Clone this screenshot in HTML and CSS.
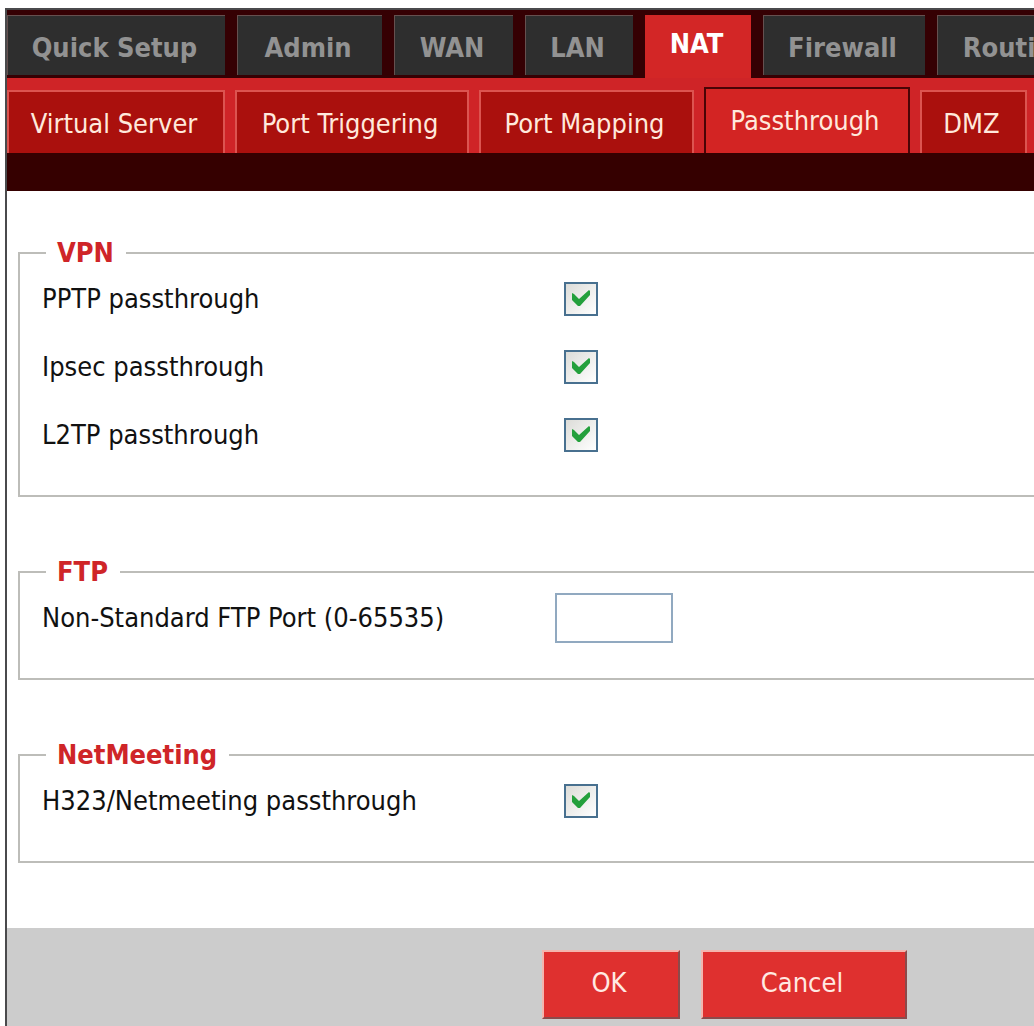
FILE: index.html
```html
<!DOCTYPE html>
<html lang="en">
<head>
<meta charset="utf-8">
<meta name="viewport" content="width=device-width, initial-scale=1">
<title>NAT - Passthrough</title>
<link rel="stylesheet" href="styles.css">
</head>
<body>
<svg class="defs" aria-hidden="true">
  <symbol id="tick" viewBox="0 0 20 20"><path d="M1 4 L3 5 L8 10 L18 1 L19 2 L19 6 L9 17 L7 17 L1 11 Z" fill="#24a03c"/></symbol>
</svg>
<div class="frame">
  <nav class="tabs" aria-label="Sections">
    <a class="tab" href="#">Quick Setup</a>
    <a class="tab" href="#">Admin</a>
    <a class="tab" href="#">WAN</a>
    <a class="tab" href="#">LAN</a>
    <a class="tab tab-active" href="#" aria-current="page">NAT</a>
    <a class="tab" href="#">Firewall</a>
    <a class="tab" href="#">Routing</a>
  </nav>
  <nav class="subtabs" aria-label="NAT pages">
    <a class="subtab" href="#">Virtual Server</a>
    <a class="subtab" href="#">Port Triggering</a>
    <a class="subtab" href="#">Port Mapping</a>
    <a class="subtab subtab-active" href="#" aria-current="page">Passthrough</a>
    <a class="subtab" href="#">DMZ</a>
  </nav>
  <div class="strip"></div>
  <form class="form">
    <div class="groups">
      <fieldset class="group">
        <legend>VPN</legend>
        <div class="row">
          <label for="pptp">PPTP passthrough</label>
          <span class="check"><input type="checkbox" id="pptp" checked><svg><use href="#tick"/></svg></span>
        </div>
        <div class="row">
          <label for="ipsec">Ipsec passthrough</label>
          <span class="check"><input type="checkbox" id="ipsec" checked><svg><use href="#tick"/></svg></span>
        </div>
        <div class="row">
          <label for="l2tp">L2TP passthrough</label>
          <span class="check"><input type="checkbox" id="l2tp" checked><svg><use href="#tick"/></svg></span>
        </div>
      </fieldset>
      <fieldset class="group">
        <legend>FTP</legend>
        <div class="row">
          <label for="port">Non-Standard FTP Port (0-65535)</label>
          <input class="port" type="text" id="port" inputmode="numeric">
        </div>
      </fieldset>
      <fieldset class="group">
        <legend>NetMeeting</legend>
        <div class="row">
          <label for="h323">H323/Netmeeting passthrough</label>
          <span class="check"><input type="checkbox" id="h323" checked><svg><use href="#tick"/></svg></span>
        </div>
      </fieldset>
    </div>
    <div class="actions">
      <button class="button button-ok" type="submit">OK</button>
      <button class="button button-cancel" type="button">Cancel</button>
    </div>
  </form>
</div>
</body>
</html>
```
FILE: styles.css
```css
* {
  box-sizing: border-box;
}

body {
  margin: 0;
  background: #fff;
  color: #111;
  font: 27px/32px "DejaVu Sans Condensed", Tahoma, "DejaVu Sans", sans-serif;
}

.defs {
  display: none;
}

.frame {
  display: flex;
  flex-direction: column;
  min-height: calc(100vh - 8px);
  margin: 8px 0 0 5px;
  border: solid #4a4a4c;
  border-width: 2px 0 0 2px;
  overflow: hidden;
}

.tabs {
  display: grid;
  grid-template-columns: 218px 145px 119px 108px 106px 162px 162px;
  column-gap: 12px;
  height: 68px;
  padding-top: 5px;
  background: #350003;
}

.tab {
  height: 60px;
  padding: 16px 4px 0 0;
  border: solid #65504f;
  border-width: 1px 0 0 1px;
  background: #2e2e2e;
  color: #929292;
  font-weight: bold;
  text-align: center;
  text-decoration: none;
}

.tab-active {
  height: 64px;
  padding-top: 12px;
  border-color: #d32626;
  background: #d32626;
  color: #fff;
}

.subtabs {
  display: grid;
  grid-template-columns: 218px 234px 215px 206px 107px;
  column-gap: 10px;
  height: 75px;
  padding-top: 12px;
  background: #cf2427;
}

.subtab {
  padding: 16px 4px 0 0;
  border: 2px solid #dc5450;
  border-bottom: 0;
  background: #aa100d;
  color: #ffe9dc;
  text-align: center;
  text-decoration: none;
}

.subtab-active {
  margin-top: -3px;
  border-color: #4a0406;
  background: #d32423;
}

.strip {
  height: 38px;
  background: #350000;
}

.form {
  display: flex;
  flex: 1;
  flex-direction: column;
}

.groups {
  display: grid;
  gap: 63px;
  padding: 50px 0 65px 11px;
}

.group {
  min-width: 0;
  margin: 0;
  padding: 0 0 26px 22px;
  border: 2px solid #bdbdb9;
  border-right: 0;
}

.group legend {
  margin-left: 4px;
  padding: 0 12px 0 11px;
  color: #cf2528;
  font-weight: bold;
  line-height: 24px;
}

.row {
  display: grid;
  grid-template-columns: 513px 1fr;
  align-items: center;
  height: 68px;
}

.check {
  display: grid;
  place-items: center;
  justify-self: start;
  margin-left: 9px;
}

.check input,
.check svg {
  grid-area: 1 / 1;
}

.check input {
  appearance: none;
  width: 34px;
  height: 34px;
  margin: 0;
  border: 2px solid #48708f;
  background: linear-gradient(135deg, #dcdcd8, #fff);
}

.check svg {
  width: 20px;
  height: 20px;
  pointer-events: none;
}

.check input:not(:checked) + svg {
  visibility: hidden;
}

.port {
  width: 118px;
  height: 50px;
  padding: 0 8px;
  border: 2px solid #91a9c0;
  background: #fff;
  font: inherit;
}

.actions {
  display: flex;
  flex: 1;
  align-items: flex-start;
  gap: 21px;
  padding: 22px 0 6px 535px;
  background: #ccc;
}

.button {
  height: 69px;
  padding: 0 4px 4px 0;
  border: 2px solid;
  border-color: #f3b5ae #8b4a4b #8b4a4b #f3b5ae;
  background: #df302f;
  color: #ffe9e2;
  font: inherit;
}

.button-ok {
  width: 138px;
}

.button-cancel {
  width: 206px;
}
```
